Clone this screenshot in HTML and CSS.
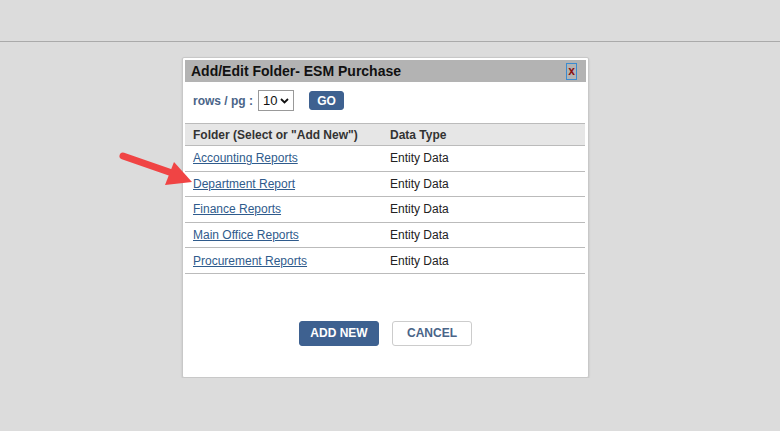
FILE: index.html
```html
<!DOCTYPE html>
<html lang="en">
  <head>
    <meta charset="UTF-8" />
    <title>Add/Edit Folder</title>
    <link rel="stylesheet" href="styles.css">
  </head>
  <body>
    <div class="top-bar"></div>

    <div class="dialog">
      <div class="dialog-title">
        <span>Add/Edit Folder- ESM Purchase</span>
        <button class="close-btn">x</button>
      </div>

      <div class="pager">
        <label for="rows">rows / pg :</label>
        <div class="select-wrap">
          <select id="rows" class="rows-select">
            <option>10</option>
            <option>25</option>
            <option>50</option>
          </select>
          <svg class="chevron" width="9" height="6" viewBox="0 0 9 6">
            <path d="M1 1 L4.5 4.5 L8 1" fill="none" stroke="#111" stroke-width="1.8" />
          </svg>
        </div>
        <button class="btn btn-primary btn-go">GO</button>
      </div>

      <table class="folder-table">
        <thead>
          <tr>
            <th class="col-name">Folder (Select or "Add New")</th>
            <th>Data Type</th>
          </tr>
        </thead>
        <tbody>
          <tr><td><a href="#">Accounting Reports</a></td><td>Entity Data</td></tr>
          <tr><td><a href="#">Department Report</a></td><td>Entity Data</td></tr>
          <tr><td><a href="#">Finance Reports</a></td><td>Entity Data</td></tr>
          <tr><td><a href="#">Main Office Reports</a></td><td>Entity Data</td></tr>
          <tr><td><a href="#">Procurement Reports</a></td><td>Entity Data</td></tr>
        </tbody>
      </table>

      <div class="actions">
        <button class="btn btn-primary btn-wide">ADD NEW</button>
        <button class="btn btn-default btn-wide">CANCEL</button>
      </div>
    </div>

    <svg class="pointer" width="90" height="50" viewBox="110 145 90 50">
      <line x1="123" y1="156" x2="172" y2="173" stroke="#f04444" stroke-width="7" stroke-linecap="round" />
      <polygon points="192,182 165,185 174,162" fill="#f04444" />
    </svg>
  </body>
</html>
```

FILE: styles.css
```css
body {
  margin: 0;
  background: #dcdcdc;
  font-family: "Liberation Sans", Arial, sans-serif;
  font-size: 12px;
  color: #222;
}
.top-bar {
  height: 41px;
  border-bottom: 1px solid #aaa;
}
.dialog {
  width: 401px;
  margin: 15px 0 0 182px;
  padding: 2px 2px 31px 2px;
  background: #fff;
  border: 1px solid #c8c8c8;
  border-radius: 2px;
  box-shadow: 0 1px 2px rgba(0, 0, 0, 0.15);
}
.dialog-title {
  display: flex;
  align-items: center;
  justify-content: space-between;
  height: 22px;
  padding: 0 9px 0 6px;
  background: #b3b3b3;
  font-size: 14px;
  font-weight: bold;
  color: #111;
}
.close-btn {
  width: 11px;
  height: 17px;
  padding: 0;
  border: 1px solid #3a8bd0;
  background: transparent;
  color: #8b0f0f;
  font-family: "Liberation Sans", Arial, sans-serif;
  font-size: 12px;
  font-weight: bold;
  line-height: 13px;
}
.pager {
  display: flex;
  align-items: center;
  height: 21px;
  padding: 8px 0 0 8px;
  margin-bottom: 12px;
  color: #4a6488;
  font-weight: bold;
}
.select-wrap {
  position: relative;
  margin-left: 5px;
}
.rows-select {
  display: block;
  width: 36px;
  height: 21px;
  padding: 0 0 0 4px;
  border: 1px solid #999;
  background: #fff;
  appearance: none;
  -webkit-appearance: none;
  font-family: "Liberation Sans", Arial, sans-serif;
  font-size: 13px;
  color: #111;
}
.chevron {
  position: absolute;
  right: 5px;
  top: 8px;
  pointer-events: none;
}
.btn {
  border-radius: 3px;
  font-family: "Liberation Sans", Arial, sans-serif;
  font-weight: bold;
  font-size: 12px;
  cursor: pointer;
}
.btn-primary {
  background: #3e6190;
  border: 1px solid #3e6190;
  color: #fff;
}
.btn-default {
  background: #fff;
  border: 1px solid #ccc;
  color: #4a6488;
}
.btn-go {
  margin-left: 15px;
  width: 35px;
  height: 19px;
  padding: 0;
}
.folder-table {
  width: 400px;
  border-collapse: collapse;
}
.folder-table th {
  height: 21px;
  padding: 0 0 0 8px;
  background: #e6e6e6;
  border-top: 1px solid #bbb;
  border-bottom: 1px solid #bbb;
  text-align: left;
  color: #333;
  font-weight: bold;
}
.folder-table .col-name {
  width: 189px;
}
.folder-table td {
  height: 24.6px;
  padding: 0 0 0 8px;
  border-bottom: 1px solid #bbb;
  color: #222;
}
.folder-table a {
  color: #2f5b8c;
}
.actions {
  display: flex;
  justify-content: center;
  gap: 13px;
  margin-top: 47px;
}
.btn-wide {
  width: 80px;
  height: 25px;
  padding: 0;
}
.pointer {
  position: absolute;
  left: 110px;
  top: 145px;
}
```
